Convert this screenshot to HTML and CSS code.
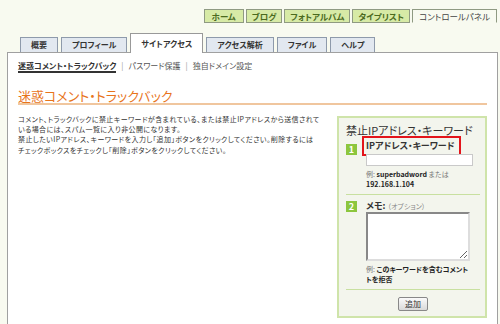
FILE: index.html
```html
<!DOCTYPE html>
<html lang="ja">
<head>
  <meta charset="UTF-8">
  <title>コントロールパネル - 迷惑コメント・トラックバック</title>
  <link rel="stylesheet" href="styles.css">
</head>
<body>
  <div id="wrapper">
    <ul class="global-nav">
      <li><a href="#">ホーム</a></li>
      <li><a href="#">ブログ</a></li>
      <li><a href="#">フォトアルバム</a></li>
      <li><a href="#">タイプリスト</a></li>
      <li class="current"><a href="#">コントロールパネル</a></li>
    </ul>
    <ul class="section-tabs">
      <li><a href="#">概要</a></li>
      <li><a href="#">プロフィール</a></li>
      <li class="current"><a href="#">サイトアクセス</a></li>
      <li><a href="#">アクセス解析</a></li>
      <li><a href="#">ファイル</a></li>
      <li><a href="#">ヘルプ</a></li>
    </ul>
    <div class="panel">
      <div class="subnav">
        <a href="#" class="current">迷惑コメント・トラックバック</a>
        <span class="sep">|</span>
        <a href="#">パスワード保護</a>
        <span class="sep">|</span>
        <a href="#">独自ドメイン設定</a>
      </div>
      <h1 class="page-title">迷惑コメント・トラックバック</h1>
      <div class="columns">
        <p class="intro">
          コメント、トラックバックに禁止キーワードが含まれている、または禁止IPアドレスから送信されて<br>
          いる場合には、スパム一覧に入り非公開になります。<br>
          禁止したいIPアドレス、キーワードを入力し「追加」ボタンをクリックしてください。削除するには<br>
          チェックボックスをチェックし「削除」ボタンをクリックしてください。
        </p>
        <form class="block-box">
          <h2>禁止IPアドレス・キーワード</h2>
          <div class="step">
            <span class="step-no">1</span>
            <div class="step-body">
              <label class="step-label marked">IPアドレス・キーワード</label>
              <input type="text" class="text-input">
              <p class="hint">例: <b>superbadword</b> または<br><b>192.168.1.104</b></p>
            </div>
          </div>
          <div class="step">
            <span class="step-no">2</span>
            <div class="step-body">
              <label class="step-label">メモ: <span class="optional">（オプション）</span></label>
              <textarea class="memo"></textarea>
              <p class="hint">例: <b>このキーワードを含むコメント<br>トを拒否</b></p>
            </div>
          </div>
          <div class="submit">
            <button type="button">追加</button>
          </div>
        </form>
      </div>
    </div>
  </div>
</body>
</html>
```

FILE: styles.css
```css
body {
  margin: 0;
  font-family: "Noto Sans CJK JP", "Noto Sans", sans-serif;
  font-feature-settings: "palt";
  background-color: #f8faf0;
  color: #333;
  font-size: 8px;
}
a {
  color: inherit;
  text-decoration: none;
}
#wrapper {
  height: 324px;
  overflow: hidden;
}

/* グローバルナビ */
.global-nav {
  display: flex;
  justify-content: flex-end;
  gap: 2px;
  list-style: none;
  margin: 0;
  padding: 9px 3px 0 0;
}
.global-nav li a {
  display: block;
  height: 12px;
  line-height: 12px;
  padding: 0 5px;
  font-size: 8.5px;
  font-weight: bold;
  color: #4b6a1e;
  background-color: #d7eaa6;
  border: 1px solid #8f9a82;
}
.global-nav li:first-child a {
  padding: 0 7px;
}
.global-nav li.current a {
  padding: 0 6px;
  background-color: #f8faf0;
  color: #444;
  font-weight: normal;
  border-bottom-color: #f8faf0;
}

/* セクションタブ */
.section-tabs {
  display: flex;
  align-items: flex-end;
  gap: 3px;
  list-style: none;
  margin: 0;
  padding: 10px 0 0 20px;
  position: relative;
  z-index: 2;
}
.section-tabs li a {
  display: block;
  height: 14px;
  line-height: 14px;
  padding: 0 10px;
  font-weight: bold;
  color: #333;
  background-color: #e2e8f0;
  border: 1px solid #8e9aab;
  border-bottom: none;
}
.section-tabs li.current a {
  height: 19px;
  line-height: 20px;
  background-color: #fff;
  margin-bottom: -1px;
  border-color: #999;
}

/* メインパネル */
.panel {
  margin: 0 2px 0 7px;
  height: 300px;
  background-color: #fff;
  border: 1px solid #a0a0a0;
  padding: 0 10px 0 10px;
  position: relative;
  z-index: 1;
}
.subnav {
  display: flex;
  align-items: center;
  gap: 5px;
  padding-top: 6px;
  color: #555;
  line-height: 12px;
}
.subnav .current {
  font-weight: bold;
  color: #333;
  border-bottom: 2px solid #333;
  line-height: 11px;
  margin-top: 1px;
}
.subnav .sep {
  color: #999;
}
.page-title {
  margin: 15px 0 0 0;
  font-size: 13px;
  font-weight: normal;
  line-height: 15px;
  color: #e8741c;
  padding-bottom: 0;
  border-bottom: 2px solid #f0c69e;
}
.columns {
  display: flex;
  gap: 6px;
  margin-top: 10px;
}
.intro {
  flex: 1;
  margin: -1px 0 0 0;
  font-size: 7px;
  line-height: 10.2px;
  letter-spacing: 0.4px;
  color: #333;
  white-space: nowrap;
}

/* 禁止IPアドレスボックス */
.block-box {
  box-sizing: border-box;
  width: 150px;
  flex-shrink: 0;
  margin: 1px 0 0 0;
  background-color: #f3f5ed;
  border: 2px solid #cfe4aa;
  padding: 5px 5px 5px 7px;
}
.block-box h2 {
  margin: 0;
  font-size: 11px;
  font-weight: normal;
  line-height: 14px;
  color: #333;
  white-space: nowrap;
}
.step {
  display: flex;
  gap: 9px;
  border-bottom: 1px solid #c8e0a0;
  padding-bottom: 5px;
}
.step + .step {
  padding-top: 5px;
}
.step-no {
  flex-shrink: 0;
  width: 11px;
  height: 11px;
  margin-top: 7px;
  background-color: #8cc63e;
  color: #fff;
  font-size: 9px;
  font-weight: bold;
  line-height: 11px;
  text-align: center;
}
.step + .step .step-no {
  margin-top: 1px;
}
.step-body {
  display: flex;
  flex-direction: column;
  align-items: flex-start;
}
.step-label {
  font-size: 9px;
  font-weight: bold;
  line-height: 12px;
  color: #333;
  white-space: nowrap;
}
.step-label.marked {
  margin-top: 3px;
  padding-right: 2px;
  outline: 2px solid #e3141b;
  outline-offset: 2px;
}
.optional {
  font-weight: normal;
  font-size: 7px;
  color: #888;
}
.text-input {
  box-sizing: border-box;
  width: 107px;
  height: 12px;
  margin: 2px 0 0 0;
  padding: 0;
  border: 1px solid #c9c9c9;
  background-color: #fff;
}
.memo {
  box-sizing: border-box;
  width: 104px;
  height: 49px;
  margin: 0;
  padding: 0;
  border: 2px solid;
  border-color: #888 #ddd #ddd #888;
  background-color: #fff;
  resize: both;
}
.hint {
  margin: 3px 0 0 0;
  font-size: 7px;
  line-height: 10px;
  color: #777;
}
.hint b {
  color: #222;
}
.submit {
  text-align: center;
  padding-top: 7px;
}
.submit button {
  font-family: inherit;
  font-size: 8px;
  height: 14px;
  width: 30px;
  padding: 0;
  line-height: 12px;
  color: #333;
  background: linear-gradient(#fafafa, #d9d9d9);
  border: 1px solid #888;
  border-radius: 2px;
}
```
